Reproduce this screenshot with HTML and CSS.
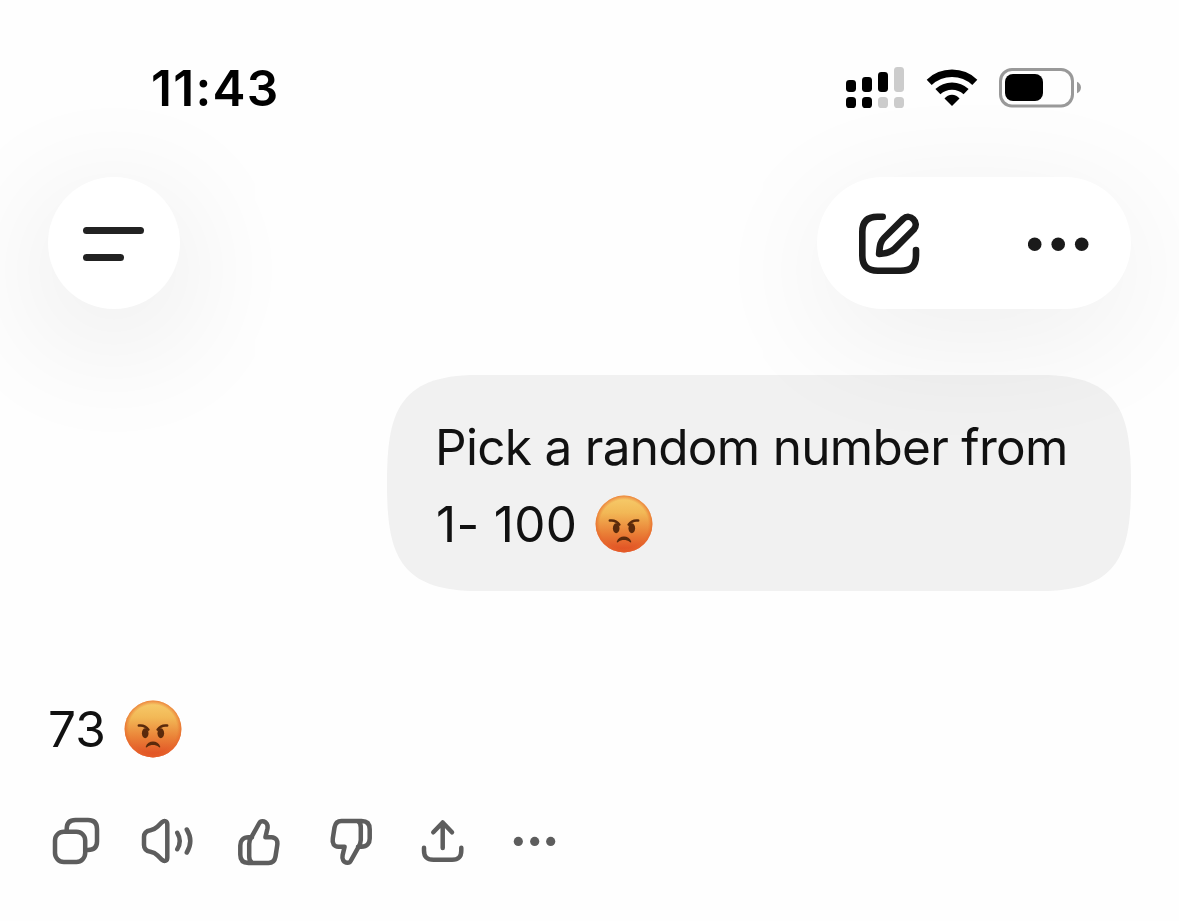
FILE: index.html
```html
<!DOCTYPE html>
<html lang="en">

<head>
    <meta charset="UTF-8">
    <title>Chat</title>
    <link rel="stylesheet" href="styles.css">
</head>

<body>
    <!-- shared shapes -->
    <svg class="defs" aria-hidden="true">
        <defs>
            <linearGradient id="face" x1="0" y1="0" x2="0" y2="1">
                <stop offset="0" stop-color="#f7cd6c" />
                <stop offset="0.3" stop-color="#f2b856" />
                <stop offset="0.65" stop-color="#ea8137" />
                <stop offset="1" stop-color="#e04a22" />
            </linearGradient>
            <radialGradient id="rim">
                <stop offset="0.85" stop-color="#e8702c" stop-opacity="0" />
                <stop offset="1" stop-color="#e8642c" stop-opacity="0.7" />
            </radialGradient>
            <symbol id="angry" viewBox="-29 -29 58 58">
                <circle r="28.4" fill="url(#face)" />
                <circle r="28.4" fill="url(#rim)" />
                <g fill="none" stroke="#5a2a0c" stroke-width="2.5" stroke-linecap="round">
                    <path d="M-14.2 -3.4C-10 -4 -7 -2.8 -4.6 0.6" />
                    <path d="M14.2 -3.4C10 -4 7 -2.8 4.6 0.6" />
                </g>
                <g fill="#5a2a0c">
                    <ellipse cx="-7.8" cy="4.2" rx="3.3" ry="5" />
                    <ellipse cx="7.8" cy="4.2" rx="3.3" ry="5" />
                    <path d="M-7.2 17.4C-5 10.8 5 10.8 7.2 17.4C7.4 18.6 6.5 18.7 5.8 18C2.4 15.4 -2.4 15.4 -5.8 18C-6.5 18.7 -7.4 18.6 -7.2 17.4Z" />
                </g>
            </symbol>
            <symbol id="thumb" viewBox="0 0 48 54">
                <path d="M17 22.3H13.5C8 22.3 5.3 25.5 5.3 30.5V39.8C5.3 45 8 48 13.5 48H33.5C38 48 39.8 45.5 40.5 41.5L42.2 30.5C43 25.5 41 22.5 36.5 22.3H30.4L32.4 13.8C33.2 10 31.5 6.5 27.5 6.2C25.8 6.1 24.9 7 24.2 8.3L17 21.2C15 24 14.2 25.5 14.2 29V41.5C14.2 45 15.3 47 17.5 48" />
            </symbol>
        </defs>
    </svg>

    <div class="status-bar">
        <span class="time">11:43</span>
        <div class="status-icons">
            <svg class="signal" width="58" height="42" viewBox="0 0 58 42">
                <rect x="0" y="13" width="10" height="12" rx="3.4" />
                <rect x="16" y="10" width="10" height="15" rx="3.4" />
                <rect x="32" y="5" width="10" height="20" rx="3.4" />
                <rect class="off" x="48" y="0" width="10" height="25" rx="3.4" />
                <rect x="0" y="30" width="10" height="11" rx="3.6" />
                <rect x="16" y="30" width="10" height="11" rx="3.6" />
                <rect class="off" x="32" y="30" width="10" height="11" rx="3.6" />
                <rect class="off" x="48" y="30" width="10" height="11" rx="3.6" />
            </svg>
            <svg class="wifi" width="52" height="42" viewBox="0 0 52 42">
                <g fill="none" stroke="#000" stroke-width="7.3">
                    <path d="M3.2 15.3A33.3 33.3 0 0 1 48.8 15.3" />
                    <path d="M11.9 24.7A20.5 20.5 0 0 1 40.1 24.7" />
                </g>
                <path d="M26 39L18.5 31.6C22 26.4 30 26.4 33.5 31.6Z" />
            </svg>
            <svg class="battery" width="83" height="42" viewBox="0 0 83 42">
                <rect x="1.5" y="2.5" width="72" height="36.5" rx="11.5" fill="none" stroke="#999" stroke-width="3" />
                <rect x="6" y="7" width="38" height="27" rx="8" />
                <path d="M78 14.7C83.3 16.8 83.3 24.2 78 26.3Z" fill="#999" />
            </svg>
        </div>
    </div>

    <div class="header">
        <button class="menu-button" aria-label="Menu">
            <span class="line"></span>
            <span class="line short"></span>
        </button>
        <div class="actions">
            <svg class="compose" width="68" height="68" viewBox="0 0 68 68">
                <path d="M26.7 6.7H21.5C11.5 6.7 6.3 11.5 6.3 22V45.5C6.3 56 11.5 60.7 22 60.7H44.5C55 60.7 60 56 60 45.5V40" />
                <path d="M47.2 8.9L28 28C24.6 31.4 23.8 34.5 23.1 43.9C31.8 43.4 35.2 42.1 38.5 38.8L57.8 19.5C63.8 12.5 54.2 2.6 47.2 8.9Z" />
            </svg>
            <svg class="more" width="62" height="16" viewBox="0 0 62 16">
                <circle cx="6.7" cy="8.3" r="6.8" />
                <circle cx="30.2" cy="8.3" r="6.8" />
                <circle cx="53.7" cy="8.3" r="6.8" />
            </svg>
        </div>
    </div>

    <div class="chat">
        <div class="question">
            <span class="question-text">Pick a random number from</span><br>
            <span class="range">1- 100</span><svg class="emoji" role="img" aria-label="😡"><use href="#angry" /></svg>
        </div>
        <div class="answer">73<svg class="emoji" role="img" aria-label="😡"><use href="#angry" /></svg></div>
        <div class="toolbar">
            <svg width="52" height="54" viewBox="0 0 52 54">
                <rect x="5" y="16.7" width="30.2" height="30.2" rx="8.8" />
                <path d="M16.7 16.7V14C16.7 8 19.5 5 25.5 5H38C44 5 47 8 47 14V26.5C47 32 44 35 38 35H35.5" />
            </svg>
            <svg width="56" height="54" viewBox="0 0 56 54">
                <path d="M27.3 9.5V42.5C27.3 46 24.5 47 22 44.8L17.5 40.3C15.5 38.3 13.5 37.3 10.5 36.8C6.5 36.1 4 34 4 30V22C4 18 6.5 15.9 10.5 15.2C13.5 14.7 15.5 13.7 17.5 11.7L22 7.2C24.5 5 27.3 6 27.3 9.5Z" />
                <path d="M37.3 17.8Q42.2 26 37.3 34.2M46.8 14.5Q53.8 26 46.8 37.5" />
            </svg>
            <svg width="48" height="54"><use href="#thumb" /></svg>
            <svg class="down" width="48" height="54"><use href="#thumb" /></svg>
            <svg width="50" height="54" viewBox="0 0 50 54">
                <path d="M24.7 33V7.5M15.3 17.3L24.7 7.5L34 17.3" />
                <path d="M6 32.7V35.5C6 42 9 44.7 15.5 44.7H34C40.3 44.7 43.3 42 43.3 35.5V32.7" />
            </svg>
            <svg class="dots" width="46" height="54" viewBox="0 0 46 54">
                <circle cx="6.3" cy="26.4" r="4.6" />
                <circle cx="22.7" cy="26.4" r="4.6" />
                <circle cx="38.7" cy="26.4" r="4.6" />
            </svg>
        </div>
    </div>
</body>

</html>
```

FILE: styles.css
```css
body {
    margin: 0;
    height: 921px;
    overflow: hidden;
    background: #fefefe;
    color: #111;
    font-family: Inter, "Liberation Sans", sans-serif;
    font-size: 49.5px;
    line-height: 77px;
}

svg {
    display: block;
    flex: none;
}

.defs {
    position: absolute;
    width: 0;
    height: 0;
}

.status-bar {
    display: flex;
    justify-content: space-between;
    height: 127px;
    padding: 50px 97px 0 151px;
    box-sizing: border-box;
}

.time {
    color: #000;
    font-weight: 600;
    letter-spacing: 1.3px;
}

.status-icons {
    display: flex;
    padding-top: 17px;
}

.signal .off {
    fill: #ccc;
}

.wifi {
    margin: 0 21.5px;
}

/* shadow spills over the chat below */
.header {
    position: relative;
    z-index: 1;
    display: flex;
    justify-content: space-between;
    margin: 50px 48px 0;
}

.menu-button,
.actions {
    display: flex;
    box-sizing: border-box;
    height: 132px;
    background: #fff;
    border-radius: 66px;
    box-shadow: 0 27px 135px rgba(0, 0, 0, 0.11);
}

.menu-button {
    flex-direction: column;
    justify-content: center;
    gap: 20px;
    width: 132px;
    padding: 2px 0 0 35px;
    border: none;
}

.line {
    width: 60.5px;
    height: 7px;
    border-radius: 4px;
    background: #222;
}

.line.short {
    width: 40.5px;
}

.actions {
    justify-content: space-between;
    align-items: center;
    width: 314px;
    padding: 2px 41px 0 39px;
    box-shadow: 0 27px 130px rgba(0, 0, 0, 0.07);
}

.compose {
    fill: none;
    stroke: #1a1a1a;
    stroke-width: 6.6;
    stroke-linecap: round;
    stroke-linejoin: round;
}

.more {
    fill: #1a1a1a;
}

.chat {
    display: flex;
    flex-direction: column;
    padding: 66px 48px 0;
}

.question {
    align-self: flex-end;
    width: 744px;
    height: 216px;
    box-sizing: border-box;
    padding: 34px 0 0 48px;
    background: #f1f1f1;
    clip-path: path("M0 108C0 40 10 0 90 0H654C734 0 744 40 744 108C744 176 734 216 654 216H90C10 216 0 176 0 108Z");
    white-space: nowrap;
}

.question-text {
    letter-spacing: -0.71px;
}

.range {
    padding-left: 1px;
    letter-spacing: 0.3px;
}

.emoji {
    display: inline-block;
    width: 58px;
    height: 58px;
    margin-left: 18px;
    vertical-align: -10.5px;
}

.answer {
    height: 77px;
    margin-top: 100px;
}

.toolbar {
    display: grid;
    grid-template-columns: 90px 95px 92px 91px 94px 46px;
    margin: 47px 0 0 2px;
    fill: none;
    stroke: #5d5d5d;
    stroke-width: 4.5;
    stroke-linecap: round;
    stroke-linejoin: round;
}

.down {
    transform: rotate(180deg);
}

.dots {
    fill: #5d5d5d;
    stroke: none;
}
```
